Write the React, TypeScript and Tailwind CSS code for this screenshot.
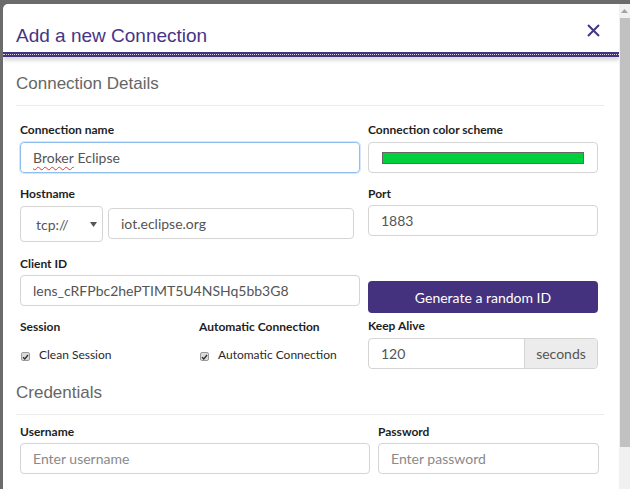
import { FunctionComponent, ReactNode } from "react";

const form = { fontFamily: "Lato, 'Open Sans', sans-serif" };
const head = { fontFamily: "'Liberation Sans', Arial, sans-serif" };

const Label: FunctionComponent<{ children: ReactNode; className?: string }> = ({
  children,
  className = "",
}) => (
  <div className={`h-4 text-[12px] leading-4 font-bold text-[#1e1e1e] ${className}`}>
    {children}
  </div>
);

const Field: FunctionComponent<{
  value?: string;
  placeholder?: string;
  className?: string;
}> = ({ value, placeholder, className = "" }) => (
  <div
    className={`flex h-[31px] items-center rounded-[4px] border border-[#d4d4d4] bg-white px-3 text-[14px] ${
      value ? "text-[#555]" : "text-[#8a8a8a]"
    } ${className}`}
  >
    {value ?? placeholder}
  </div>
);

const Check: FunctionComponent<{ label: string }> = ({ label }) => (
  <div className="flex items-center gap-[9px] text-[12px] text-[#2a2a2a]">
    <span className="ml-px flex h-[9px] w-[9px] items-center justify-center rounded-[2px] border border-[#9a9a9a] bg-[#dcdcdc]">
      <svg width="7" height="6" viewBox="0 0 7 6">
        <path d="M1 3.2 L2.8 5 L6 1" fill="none" stroke="#333" strokeWidth="1.4" />
      </svg>
    </span>
    <span className="-mt-[3px]">{label}</span>
  </div>
);

const Section: FunctionComponent<{ title: string }> = ({ title }) => (
  <div className="mr-[15px] border-b border-[#ececec] pb-[11px]" style={head}>
    <div className="h-[21px] text-[17px] leading-[21px] text-[#666]">{title}</div>
  </div>
);

const Scrollbar: FunctionComponent = () => (
  <div className="flex w-[11px] flex-col bg-[#f1f1f1]">
    <div className="flex h-[14px] items-center justify-center">
      <svg width="7" height="4" viewBox="0 0 7 4">
        <path d="M0 4 L3.5 0 L7 4 Z" fill="#a3a3a3" />
      </svg>
    </div>
    <div className="ml-px h-[429px] bg-[#c1c1c1]" />
  </div>
);

export default function App() {
  return (
    <div className="flex h-[489px] w-[630px] overflow-hidden bg-[#6b6b6b] pt-[4px] pl-[3px]">
      <div className="flex flex-1 overflow-hidden rounded-tl-[5px] bg-white">
        <div className="flex-1">
          {/* header */}
          <div className="flex h-[48px] items-end justify-between pb-[4px] pl-[13px] pr-[19px]">
            <h1 className="text-[19px] leading-6 text-[#463585]" style={head}>
              Add a new Connection
            </h1>
            <svg width="13" height="13" viewBox="0 0 13 13" className="mb-[11px]">
              <path d="M1 1 L12 12 M12 1 L1 12" stroke="#463585" strokeWidth="2" />
            </svg>
          </div>
          <div className="h-[5px] bg-[#45337f] pt-[2px] shadow-[0_3px_4px_rgba(0,0,0,0.18)]">
            <div className="border-t border-dotted border-white/80" />
          </div>

          <div className="pl-[13px] pt-[16px]" style={form}>
            <Section title="Connection Details" />

            <div className="pl-[4px] pr-[21px]">
              {/* name + colour */}
              <div className="mt-[16px] flex gap-2">
                <div className="w-[340px]">
                  <Label>Connection name</Label>
                  <div className="mt-[4px] flex h-[31px] items-center rounded-[4px] border border-[#8fbff0] px-3 text-[14px] text-[#555] shadow-[0_0_0_1px_rgba(128,189,255,0.35)]">
                    <span className="underline decoration-[#e33] decoration-wavy decoration-1 underline-offset-[3px]">
                      Broker
                    </span>
                    &nbsp;Eclipse
                  </div>
                </div>
                <div className="flex-1">
                  <Label>Connection color scheme</Label>
                  <div className="mt-[4px] flex h-[31px] items-center rounded-[4px] border border-[#d4d4d4] px-[13px]">
                    <div className="h-[12px] flex-1 border border-[#666] bg-[#00d03e]" />
                  </div>
                </div>
              </div>

              {/* host + port */}
              <div className="mt-[13px] flex gap-2">
                <div className="w-[340px]">
                  <Label>Hostname</Label>
                  <div className="mt-[4px] flex gap-[5px]">
                    <div className="flex h-[36px] w-[83px] items-center justify-between rounded-[4px] border border-[#d4d4d4] pl-[15px] pr-[5px] text-[14px] text-[#555]">
                      tcp://
                      <svg width="7" height="5" viewBox="0 0 7 5">
                        <path d="M0 0 L7 0 L3.5 5 Z" fill="#555" />
                      </svg>
                    </div>
                    <Field value="iot.eclipse.org" className="mt-[2px] flex-1" />
                    <div className="w-[1px]" />
                  </div>
                </div>
                <div className="flex-1">
                  <Label>Port</Label>
                  <Field value="1883" className="mt-[3px]" />
                </div>
              </div>

              {/* client id */}
              <div className="mt-[14px] flex gap-2">
                <div className="w-[340px]">
                  <Label>Client ID</Label>
                  <Field value="lens_cRFPbc2hePTIMT5U4NSHq5bb3G8" className="mt-[3px]" />
                </div>
                <div className="flex-1 pt-[25px]">
                  <button className="flex h-[32px] w-full items-center justify-center rounded-[4px] bg-[#45327f] text-[14px] text-white">
                    Generate a random ID
                  </button>
                </div>
              </div>

              {/* session / auto / keepalive */}
              <div className="flex gap-2">
                <div className="flex w-[340px]">
                  <div className="w-[179px]">
                    <Label className="mt-[6px]">Session</Label>
                    <div className="mt-[14px]">
                      <Check label="Clean Session" />
                    </div>
                  </div>
                  <div className="flex-1">
                    <Label className="mt-[6px]">Automatic Connection</Label>
                    <div className="mt-[14px]">
                      <Check label="Automatic Connection" />
                    </div>
                  </div>
                </div>
                <div className="flex-1">
                  <Label className="mt-[5px]">Keep Alive</Label>
                  <div className="mt-[4px] flex h-[31px] rounded-[4px] border border-[#d4d4d4] text-[14px] text-[#555]">
                    <div className="flex flex-1 items-center px-3">120</div>
                    <div className="flex w-[73px] items-center justify-center rounded-r-[4px] border-l border-[#d4d4d4] bg-[#ececec]">
                      seconds
                    </div>
                  </div>
                </div>
              </div>
            </div>

            <div className="mt-[13px]">
              <Section title="Credentials" />
            </div>

            <div className="flex gap-2 pl-[4px] pr-[20px]">
              <div className="w-[350px]">
                <Label className="mt-[9px]">Username</Label>
                <Field placeholder="Enter username" className="mt-[3px]" />
              </div>
              <div className="flex-1">
                <Label className="mt-[9px]">Password</Label>
                <Field placeholder="Enter password" className="mt-[3px]" />
              </div>
            </div>
          </div>
        </div>
        <Scrollbar />
      </div>
    </div>
  );
}
